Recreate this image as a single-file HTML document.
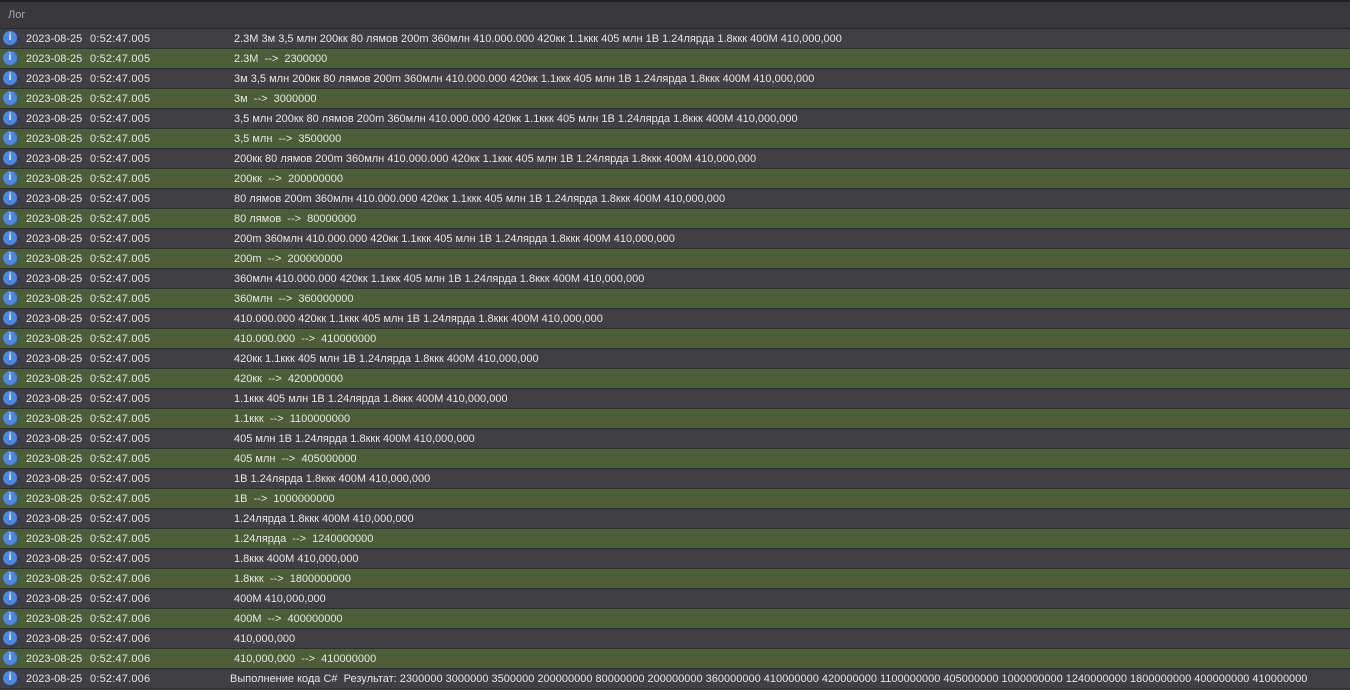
<!DOCTYPE html><html><head><meta charset="utf-8"><style>
body{margin:0;width:1350px;height:687px;overflow:hidden;background:#3f3f43;font-family:"Liberation Sans","DejaVu Sans",sans-serif;font-size:11px;color:#e6e6e6}
.top{height:2px;background:#222}
.hd{height:26px;background:#38383c;border-bottom:1px solid #2a2a2a;color:#aaa;line-height:26px;padding-left:8px;font-size:11px}
.r{height:19px;border-bottom:1px solid #2e2e30;position:relative;line-height:21px;white-space:nowrap;background:#404044}
.r.g{background:#4b5e37}
.i{position:absolute;left:3px;top:2px;width:14px;height:14px;border-radius:50%;background:#4a86e8;color:#fff;font-weight:bold;font-size:10px;line-height:14px;text-align:center}
.d{position:absolute;left:26px}.t{position:absolute;left:90px;letter-spacing:0.2px}.m{position:absolute;left:234px}
</style></head><body><div class="top"></div><div class="hd">Лог</div>
<div id="L"></div>
<script>
var rows=[["005","2.3M 3м 3,5 млн 200кк 80 лямов 200m 360млн 410.000.000 420кк 1.1ккк 405 млн 1B 1.24лярда 1.8ккк 400M 410,000,000"],["005","2.3M &nbsp;--&gt; &nbsp;2300000"],["005","3м 3,5 млн 200кк 80 лямов 200m 360млн 410.000.000 420кк 1.1ккк 405 млн 1B 1.24лярда 1.8ккк 400M 410,000,000"],["005","3м &nbsp;--&gt; &nbsp;3000000"],["005","3,5 млн 200кк 80 лямов 200m 360млн 410.000.000 420кк 1.1ккк 405 млн 1B 1.24лярда 1.8ккк 400M 410,000,000"],["005","3,5 млн &nbsp;--&gt; &nbsp;3500000"],["005","200кк 80 лямов 200m 360млн 410.000.000 420кк 1.1ккк 405 млн 1B 1.24лярда 1.8ккк 400M 410,000,000"],["005","200кк &nbsp;--&gt; &nbsp;200000000"],["005","80 лямов 200m 360млн 410.000.000 420кк 1.1ккк 405 млн 1B 1.24лярда 1.8ккк 400M 410,000,000"],["005","80 лямов &nbsp;--&gt; &nbsp;80000000"],["005","200m 360млн 410.000.000 420кк 1.1ккк 405 млн 1B 1.24лярда 1.8ккк 400M 410,000,000"],["005","200m &nbsp;--&gt; &nbsp;200000000"],["005","360млн 410.000.000 420кк 1.1ккк 405 млн 1B 1.24лярда 1.8ккк 400M 410,000,000"],["005","360млн &nbsp;--&gt; &nbsp;360000000"],["005","410.000.000 420кк 1.1ккк 405 млн 1B 1.24лярда 1.8ккк 400M 410,000,000"],["005","410.000.000 &nbsp;--&gt; &nbsp;410000000"],["005","420кк 1.1ккк 405 млн 1B 1.24лярда 1.8ккк 400M 410,000,000"],["005","420кк &nbsp;--&gt; &nbsp;420000000"],["005","1.1ккк 405 млн 1B 1.24лярда 1.8ккк 400M 410,000,000"],["005","1.1ккк &nbsp;--&gt; &nbsp;1100000000"],["005","405 млн 1B 1.24лярда 1.8ккк 400M 410,000,000"],["005","405 млн &nbsp;--&gt; &nbsp;405000000"],["005","1B 1.24лярда 1.8ккк 400M 410,000,000"],["005","1B &nbsp;--&gt; &nbsp;1000000000"],["005","1.24лярда 1.8ккк 400M 410,000,000"],["005","1.24лярда &nbsp;--&gt; &nbsp;1240000000"],["005","1.8ккк 400M 410,000,000"],["006","1.8ккк &nbsp;--&gt; &nbsp;1800000000"],["006","400M 410,000,000"],["006","400M &nbsp;--&gt; &nbsp;400000000"],["006","410,000,000"],["006","410,000,000 &nbsp;--&gt; &nbsp;410000000"],["006","Выполнение кода C# &nbsp;Результат: 2300000 3000000 3500000 200000000 80000000 200000000 360000000 410000000 420000000 1100000000 405000000 1000000000 1240000000 1800000000 400000000 410000000"]];
var h="";rows.forEach(function(r,i){h+='<div class="r'+(i%2?' g':'')+'"><div class="i">i</div><span class="d">2023-08-25</span><span class="t">0:52:47.'+r[0]+'</span><span class="m"'+(i==32?' style="left:230px"':'')+'>'+r[1]+'</span></div>'});
document.getElementById("L").innerHTML=h;
</script></body></html>
